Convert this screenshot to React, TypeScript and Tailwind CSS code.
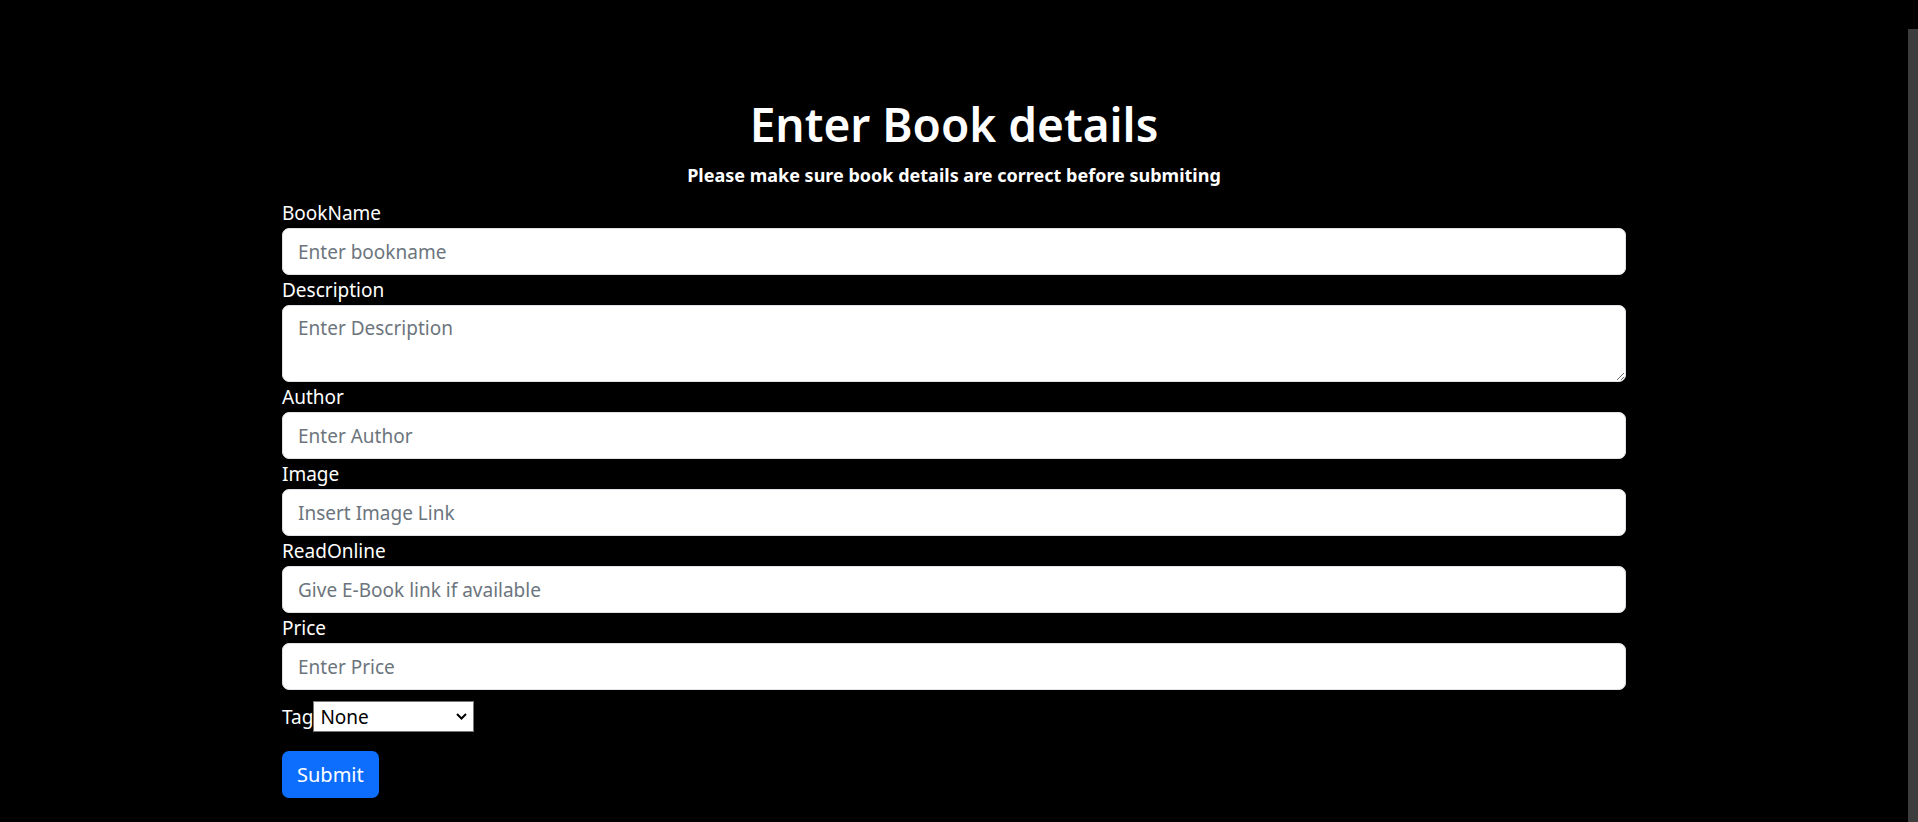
import React from "react";

const font = { fontFamily: '"Noto Sans", "Open Sans", sans-serif' };

const fields = [
  { label: "BookName", placeholder: "Enter bookname" },
  { label: "Description", placeholder: "Enter Description", area: true },
  { label: "Author", placeholder: "Enter Author" },
  { label: "Image", placeholder: "Insert Image Link" },
  { label: "ReadOnline", placeholder: "Give E-Book link if available" },
  { label: "Price", placeholder: "Enter Price" },
];

const inputCls =
  "block w-full bg-white text-[#212529] border border-[#dee2e6] rounded-[7px] px-[15px] text-[19px] placeholder:text-[#6c757d] outline-none";

const App: React.FC = () => {
  return (
    <div className="flex h-screen bg-black text-white overflow-hidden" style={font}>
      {/* Main */}
      <div className="flex-1">
        <div className="w-[1344px] mx-auto pt-[97px]">
          <h2 className="text-center text-[46px] leading-[54px] font-semibold">Enter Book details</h2>
          <p className="text-center text-[18px] leading-[27px] font-bold mt-[11px]">
            Please make sure book details are correct before submiting
          </p>

          <form className="mt-[9px]" onSubmit={(e) => e.preventDefault()}>
            {fields.map((f) => (
              <div key={f.label}>
                <label className="block text-[19px] leading-[30px]">{f.label}</label>
                {f.area ? (
                  <textarea placeholder={f.placeholder} className={`${inputCls} h-[77px] py-[7px] leading-[30px]`} />
                ) : (
                  <input type="text" placeholder={f.placeholder} className={`${inputCls} h-[47px]`} />
                )}
              </div>
            ))}

            {/* Tag */}
            <div className="flex items-center mt-[11px] h-[31px]">
              <label className="text-[19px] leading-[30px]">Tag</label>
              <div className="relative">
                <select className="appearance-none w-[161px] h-[31px] bg-white text-black border border-[#767676] pl-[6px] text-[19px] leading-[28px] outline-none">
                  <option>None</option>
                  <option>Fiction</option>
                  <option>Non-Fiction</option>
                </select>
                <svg
                  className="absolute right-[7px] top-[12px] pointer-events-none"
                  width="11"
                  height="7"
                  viewBox="0 0 11 7"
                  fill="none"
                >
                  <path d="M1 1l4.5 4.5L10 1" stroke="#000" strokeWidth="2" />
                </svg>
              </div>
            </div>

            <button
              type="submit"
              className="mt-[19px] h-[47px] px-[15px] rounded-[7px] bg-[#0d6efd] text-white text-[20px]"
            >
              Submit
            </button>
          </form>
        </div>
      </div>

      {/* scrollbar */}
      <div className="w-[10px] flex flex-col">
        <div className="h-[29px]" />
        <div className="flex-1 bg-[#3d3d3d]" />
      </div>
    </div>
  );
};

export default App;
